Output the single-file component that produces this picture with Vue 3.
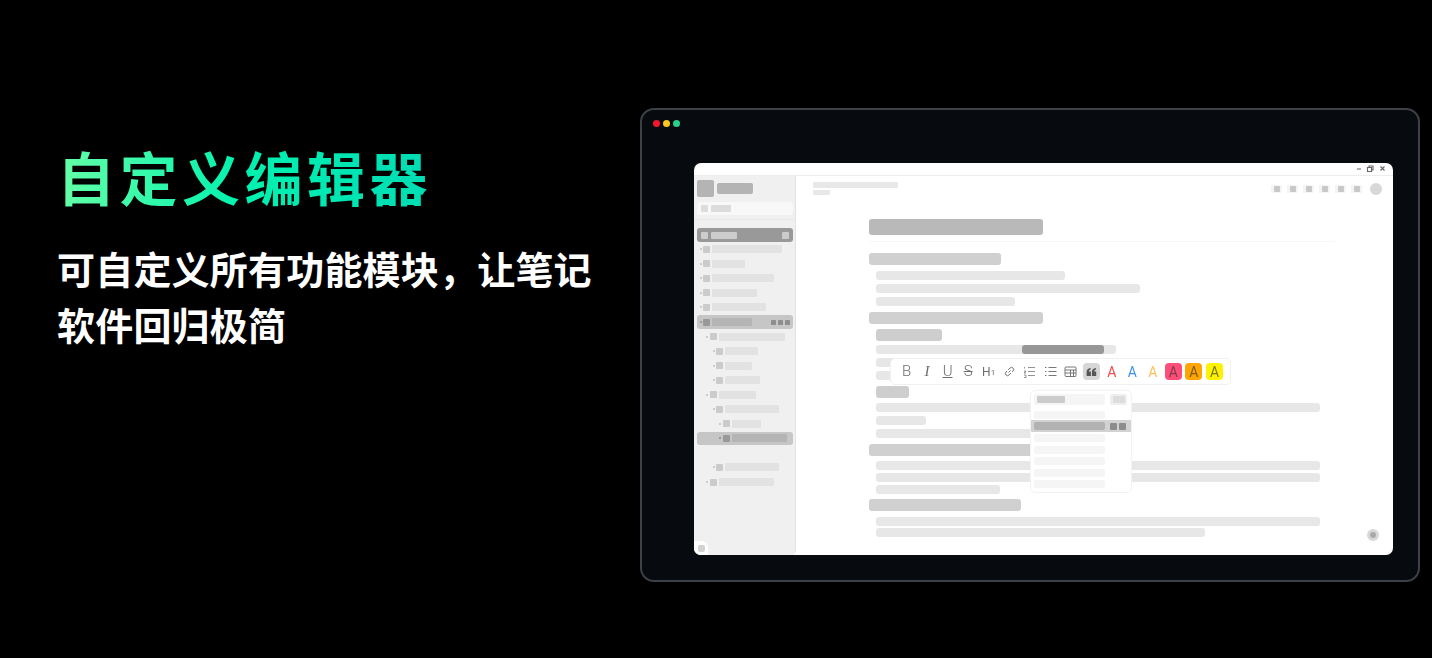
<script setup>
const rows = [
  { level: 0, w: 70 }, { level: 0, w: 33 }, { level: 0, w: 62 }, { level: 0, w: 45 }, { level: 0, w: 54 },
  { level: 0, w: 40, selected: true, actions: true },
  { level: 1, w: 66 }, { level: 2, w: 33 }, { level: 2, w: 27 }, { level: 2, w: 35 },
  { level: 1, w: 37 }, { level: 2, w: 54 }, { level: 3, w: 29 },
  { level: 3, w: 55, selected: true },
  { empty: true },
  { level: 2, w: 54 }, { level: 1, w: 55 }
]
const doc = [
  { kind: 'h2', x: 0, w: 132, h: 12, gap: 0 },
  { kind: 'p', x: 7, w: 189, h: 9, gap: 6 },
  { kind: 'p', x: 7, w: 264, h: 9, gap: 4 },
  { kind: 'p', x: 7, w: 139, h: 9, gap: 4 },
  { kind: 'h2', x: 0, w: 174, h: 12, gap: 6 },
  { kind: 'h3', x: 7, w: 66, h: 12, gap: 5 },
  { kind: 'p', x: 7, w: 240, h: 9, gap: 4, mark: true },
  { kind: 'p', x: 7, w: 30, h: 9, gap: 4 },
  { kind: 'p', x: 7, w: 30, h: 9, gap: 4 },
  { kind: 'h3', x: 7, w: 33, h: 12, gap: 6 },
  { kind: 'p', x: 7, w: 444, h: 9, gap: 5 },
  { kind: 'p', x: 7, w: 50, h: 9, gap: 4 },
  { kind: 'p', x: 7, w: 160, h: 9, gap: 4 },
  { kind: 'h2', x: 0, w: 170, h: 12, gap: 6 },
  { kind: 'p', x: 7, w: 444, h: 9, gap: 5 },
  { kind: 'p', x: 7, w: 444, h: 9, gap: 3 },
  { kind: 'p', x: 7, w: 124, h: 9, gap: 3 },
  { kind: 'h2', x: 0, w: 152, h: 12, gap: 5 },
  { kind: 'p', x: 7, w: 444, h: 9, gap: 6 },
  { kind: 'p', x: 7, w: 329, h: 9, gap: 2 }
]
const menuRows = [
  { gap: 6 }, { gap: 1, selected: true }, { gap: 2 }, { gap: 3.6 }, { gap: 3.6 }, { gap: 3.6 }, { gap: 3.6 }
]
const tools = [
  { t: 'B', cls: 'plain' }, { t: 'I', cls: 'plain italic' }, { t: 'U', cls: 'plain under' },
  { t: 'S', cls: 'plain strike' }, { t: 'H', sub: '1', cls: 'plain heading' }
]
const colors = [
  { cls: 'fg-red' }, { cls: 'fg-blue' }, { cls: 'fg-orange' },
  { cls: 'bg-pink' }, { cls: 'bg-amber' }, { cls: 'bg-yellow' }
]
</script>

<template>
  <main class="page">
    <section class="copy">
      <h1 class="headline">自定义编辑器</h1>
      <p class="lead">可自定义所有功能模块，让笔记软件回归极简</p>
    </section>

    <section class="frame">
      <div class="lights"><i class="red"></i><i class="yellow"></i><i class="green"></i></div>

      <div class="app">
        <div class="titlebar">
          <svg class="winctl" width="32" height="8" viewBox="0 0 32 8" fill="none" stroke="#666" stroke-width="1.100">
            <path d="M1 4h4" />
            <path d="M11.500 2.500h4v4h-4zM13 2.500V1h4v4h-1.500" />
            <path d="M24.500 1.500l4 4M28.500 1.500l-4 4" />
          </svg>
        </div>

        <div class="body">
          <aside class="side">
            <div class="brand"><span class="logo"></span><span class="brandname"></span></div>
            <div class="search"><b></b><span></span></div>
            <div class="rule"></div>
            <div class="active"><b></b><span></span><em></em></div>

            <div class="tree">
              <div
                v-for="(r, i) in rows"
                :key="i"
                class="row"
                :class="{ selected: r.selected }"
              >
                <template v-if="!r.empty">
                  <i class="dot" :style="{ marginLeft: 2.500 + r.level * 6.600 + 'px' }"></i>
                  <b class="sq"></b>
                  <span class="label" :style="{ width: r.w + 'px' }"></span>
                  <span v-if="r.actions" class="acts"><u></u><u></u><u></u></span>
                </template>
              </div>
            </div>

            <div class="notch"><span></span></div>
          </aside>

          <div class="main">
            <div class="topline">
              <div class="crumbs"><span class="c1"></span><span class="c2"></span></div>
              <div class="tools">
                <span v-for="n in 6" :key="n" class="tbtn"><i></i></span>
                <span class="avatar"></span>
              </div>
            </div>

            <div class="doc">
              <div class="title"></div>
              <div class="hr"></div>
              <div class="lines">
                <div
                  v-for="(b, i) in doc"
                  :key="i"
                  class="bar"
                  :class="b.kind"
                  :style="{ marginLeft: b.x + 'px', width: b.w + 'px', height: b.h + 'px', marginTop: b.gap + 'px' }"
                >
                  <span v-if="b.mark" class="mark"></span>
                </div>
              </div>
            </div>

            <div class="toolbar">
              <span v-for="t in tools" :key="t.t" class="tool" :class="t.cls">{{ t.t }}<small v-if="t.sub">{{ t.sub }}</small></span>
              <span class="tool">
                <svg width="13" height="13" viewBox="0 0 13 13" fill="none" stroke="#777" stroke-width="1">
                  <path d="M5.500 7.500l2-2M5 5L7 3a2 2 0 0 1 3 3L9 7M8 8l-2 2a2 2 0 0 1-3-3l1-1" />
                </svg>
              </span>
              <span class="tool">
                <svg width="13" height="13" viewBox="0 0 13 13" fill="none" stroke="#777" stroke-width="1">
                  <path d="M5 2.500h7M5 6.500h7M5 10.500h7M1.500 2v1.500M1 6h2L1 8h2M1 10h2v2.500H1" stroke-width=".8" />
                </svg>
              </span>
              <span class="tool">
                <svg width="13" height="13" viewBox="0 0 13 13" fill="none" stroke="#777" stroke-width="1">
                  <path d="M4.500 2.500h8M4.500 6.500h8M4.500 10.500h8M1 2.500h1.500M1 6.500h1.500M1 10.500h1.500" />
                </svg>
              </span>
              <span class="tool">
                <svg width="13" height="13" viewBox="0 0 13 13" fill="none" stroke="#777" stroke-width="1">
                  <rect x="1" y="2" width="11" height="9.500" rx="1" />
                  <path d="M1 5h11M1 8h11M6.500 5v6.500M9.500 5v6.500" />
                </svg>
              </span>
              <span class="tool quote">
                <svg width="11" height="8" viewBox="0 0 11 9" fill="#555">
                  <path d="M0 9V4.500C0 2 1.500.5 4.500 0v1.800C3.300 2.200 2.700 2.800 2.500 3.800H4.800V9zM6 9V4.500C6 2 7.500.5 10.500 0v1.800C9.300 2.200 8.700 2.800 8.500 3.800h2.300V9z" />
                </svg>
              </span>
              <span v-for="c in colors" :key="c.cls" class="tool swatch" :class="c.cls">A</span>
            </div>

            <div class="menu">
              <div class="mhead">
                <span class="mfield"><i></i></span>
                <span class="mbtn"><i></i></span>
              </div>
              <div
                v-for="(m, i) in menuRows"
                :key="i"
                class="mrow"
                :class="{ on: m.selected }"
                :style="{ marginTop: m.gap + 'px' }"
              >
                <span></span>
                <template v-if="m.selected"><b></b><b></b></template>
              </div>
            </div>

            <div class="fab"><i></i></div>
          </div>
        </div>
      </div>
    </section>
  </main>
</template>

<style>
html, body { margin: 0; background: #000; }
</style>

<style scoped>
.page {
  width: 1432px;
  height: 658px;
  box-sizing: border-box;
  padding: 108px 12px 0 57px;
  background: #000;
  display: flex;
  justify-content: space-between;
  align-items: flex-start;
  overflow: hidden;
  font-family: "Noto Sans CJK SC", "Noto Sans", sans-serif;
}
.copy { width: 541px; padding-top: 32px; }
.headline {
  margin: 0;
  font-size: 58px;
  line-height: 72px;
  font-weight: 700;
  letter-spacing: 4.500px;
  white-space: nowrap;
  width: 372px;
  background: linear-gradient(90deg, #66ffa6 0%, #00f2b0 50%, #00dcb4 100%);
  -webkit-background-clip: text;
  background-clip: text;
  color: transparent;
}
.lead {
  margin: 28px 0 0;
  color: #fff;
  font-size: 38px;
  line-height: 56px;
  font-weight: 700;
  letter-spacing: 0.200px;
}
.frame {
  width: 780px;
  height: 474px;
  box-sizing: border-box;
  border: 2px solid #3c4146;
  border-radius: 14px;
  background: #070b0f;
  padding: 11px 25px 25px 52px;
  position: relative;
}
.lights {
  position: absolute;
  left: 11px;
  top: 10px;
  display: flex;
  gap: 3px;
}
.lights i { width: 7px; height: 7px; border-radius: 50%; }
.red { background: #f5162e; }
.yellow { background: #fbc71c; }
.green { background: #27d18b; }

.app {
  margin-top: 42px;
  height: 392px;
  background: #fff;
  border-radius: 7px;
  overflow: hidden;
  display: flex;
  flex-direction: column;
  filter: blur(0.450px);
}
.titlebar {
  height: 12px;
  flex: none;
  border-bottom: 1px solid #ececec;
  display: flex;
  justify-content: flex-end;
  align-items: center;
  padding-right: 5px;
}
.body { flex: 1; display: flex; min-height: 0; }

.side {
  width: 101px;
  flex: none;
  background: #f0f0f0;
  border-right: 1px solid #e2e2e2;
  border-bottom-right-radius: 5px;
  position: relative;
  padding-top: 4px;
  box-sizing: content-box;
}
.brand { display: flex; align-items: center; gap: 3px; padding-left: 3px; height: 17px; }
.logo { width: 17px; height: 17px; background: #b4b4b4; border-radius: 2px; }
.brandname { width: 36px; height: 11px; background: #b4b4b4; border-radius: 2px; }
.search {
  margin: 5px 2px 0 3px;
  height: 13px;
  background: #f8f8f8;
  border-radius: 3px;
  display: flex;
  align-items: center;
  padding-left: 4px;
  gap: 3px;
}
.search b { width: 7px; height: 7px; background: #dcdcdc; border-radius: 1px; }
.search span { width: 20px; height: 7px; background: #dcdcdc; border-radius: 1px; }
.rule { margin-top: 4px; height: 1px; background: #e8e8e8; }
.active {
  margin: 8px 2px 0 3px;
  height: 14px;
  background: #999;
  border-radius: 3px;
  display: flex;
  align-items: center;
  padding: 0 4px;
  gap: 3px;
}
.active b { width: 7px; height: 7px; background: #ccc; border-radius: 1px; }
.active span { width: 26px; height: 7px; background: #ccc; border-radius: 1px; }
.active em { margin-left: auto; width: 7px; height: 7px; background: #ccc; border-radius: 1px; }

.row {
  margin: 0 2px 0 3px;
  height: 14.550px;
  display: flex;
  align-items: center;
  position: relative;
}
.row.selected { background: #c6c6c6; border-radius: 3px; height: 13.550px; margin-top: 0.500px; margin-bottom: 0.500px; }
.dot { width: 2px; height: 2px; flex: none; border-radius: 50%; background: #c0c0c0; margin-right: 1.500px; }
.sq { width: 7px; height: 7px; flex: none; background: #cbcbcb; border-radius: 1px; margin-right: 2px; }
.label { height: 8px; background: #e2e2e2; border-radius: 1px; }
.selected .dot { background: #8c8c8c; }
.selected .sq { background: #999; }
.selected .label { background: #b4b4b4; }
.acts { margin-left: auto; margin-right: 3px; display: flex; gap: 2px; }
.acts u { width: 5px; height: 5px; background: #8e8e8e; border-radius: 1px; }
.notch {
  position: absolute;
  left: 0;
  bottom: 0;
  width: 14px;
  height: 14px;
  background: #fff;
  border-top-right-radius: 7px;
  display: flex;
  align-items: center;
  justify-content: center;
}
.notch span { width: 7px; height: 7px; background: #d2d2d2; border-radius: 2px; }

.main { flex: 1; position: relative; min-width: 0; }
.topline {
  display: flex;
  justify-content: space-between;
  padding: 6px 11px 0 17px;
  height: 22px;
  box-sizing: border-box;
}
.crumbs { display: flex; flex-direction: column; gap: 2px; }
.c1 { width: 85px; height: 6px; background: #e8e8e8; border-radius: 1px; }
.c2 { width: 17px; height: 5px; background: #e8e8e8; border-radius: 1px; }
.tools { display: flex; align-items: center; gap: 5px; height: 14px; }
.tbtn {
  width: 11px;
  height: 8px;
  background: #f4f4f4;
  border-radius: 1px;
  display: flex;
  align-items: center;
  justify-content: center;
}
.tbtn i { width: 6px; height: 6px; background: #c8c8c8; border-radius: 1px; }
.avatar { width: 12px; height: 12px; border-radius: 50%; background: #d8d8d8; margin-left: 3px; }

.doc { padding: 21px 58px 0 73px; }
.title { width: 174px; height: 16px; background: #b9b9b9; border-radius: 3px; }
.hr { height: 1px; background: #f6f6f6; margin-top: 6px; }
.lines { margin-top: 11px; }
.bar { border-radius: 3px; position: relative; }
.h2 { background: #d0d0d0; }
.h3 { background: #cecece; }
.p { background: #e7e7e7; }
.mark {
  position: absolute;
  left: 146px;
  top: 0;
  width: 82px;
  height: 100%;
  background: #979797;
  border-radius: 3px;
}

.toolbar {
  position: absolute;
  left: 94px;
  top: 182px;
  width: 341px;
  height: 27px;
  box-sizing: border-box;
  padding: 0 7px 0 7px;
  background: #fff;
  border: 1px solid #f0f0f0;
  border-radius: 5px;
  display: flex;
  align-items: center;
  justify-content: space-between;
}
.tool {
  width: 17px;
  height: 17px;
  flex: none;
  display: flex;
  align-items: center;
  justify-content: center;
  font-family: Roboto, "Liberation Sans", sans-serif;
  font-weight: 300;
  font-size: 15px;
  line-height: 1;
  color: #6e6e6e;
  border-radius: 4px;
}
.tool small { font-size: 8px; margin-top: 3px; }
.heading { font-size: 12px; font-weight: 400; }
.italic { font-family: "Liberation Serif", serif; font-style: italic; font-weight: 400; }
.under { text-decoration: underline; text-underline-offset: 1px; text-decoration-thickness: 1px; }
.strike { text-decoration: line-through; text-decoration-thickness: 1px; }
.quote { background: #d6d6d6; }
.swatch { font-size: 14px; font-weight: 400; }
.fg-red { color: #f14c4c; }
.fg-blue { color: #3e92f5; }
.fg-orange { color: #fcc05c; }
.bg-pink { background: #ff4d79; color: #7c3b4c; }
.bg-amber { background: #ffa500; color: #7c5a1c; }
.bg-yellow { background: #fff200; color: #77771a; }

.menu {
  position: absolute;
  left: 234px;
  top: 214px;
  width: 102px;
  height: 103px;
  box-sizing: border-box;
  background: #fff;
  border: 1px solid #f2f2f2;
  border-radius: 5px;
  padding-top: 3px;
}
.mhead { display: flex; justify-content: space-between; padding: 0 4px 0 3px; }
.mfield {
  width: 71px;
  height: 11px;
  background: #f5f5f5;
  border-radius: 2px;
  display: flex;
  align-items: center;
  padding-left: 3px;
  box-sizing: border-box;
}
.mfield i { width: 28px; height: 7px; background: #ccc; border-radius: 1px; }
.mbtn {
  width: 17px;
  height: 11px;
  background: #eee;
  border-radius: 2px;
  display: flex;
  align-items: center;
  justify-content: center;
}
.mbtn i { width: 12px; height: 7px; background: #ddd; border-radius: 1px; }
.mrow { height: 8px; padding-left: 3px; display: flex; align-items: center; }
.mrow span { width: 71px; height: 8px; background: #f5f5f5; border-radius: 2px; flex: none; }
.mrow.on {
  height: 12px;
  background: #d2d2d2;
  gap: 2px;
  border-radius: 1px;
}
.mrow.on span { background: #b2b2b2; margin-right: 3px; }
.mrow.on b { width: 7px; height: 7px; background: #8c8c8c; border-radius: 1px; }

.fab {
  position: absolute;
  right: 14px;
  bottom: 14px;
  width: 12px;
  height: 12px;
  border-radius: 50%;
  background: #d8d8d8;
  display: flex;
  align-items: center;
  justify-content: center;
}
.fab i { width: 6px; height: 6px; border-radius: 50%; background: #aaa; }
</style>
